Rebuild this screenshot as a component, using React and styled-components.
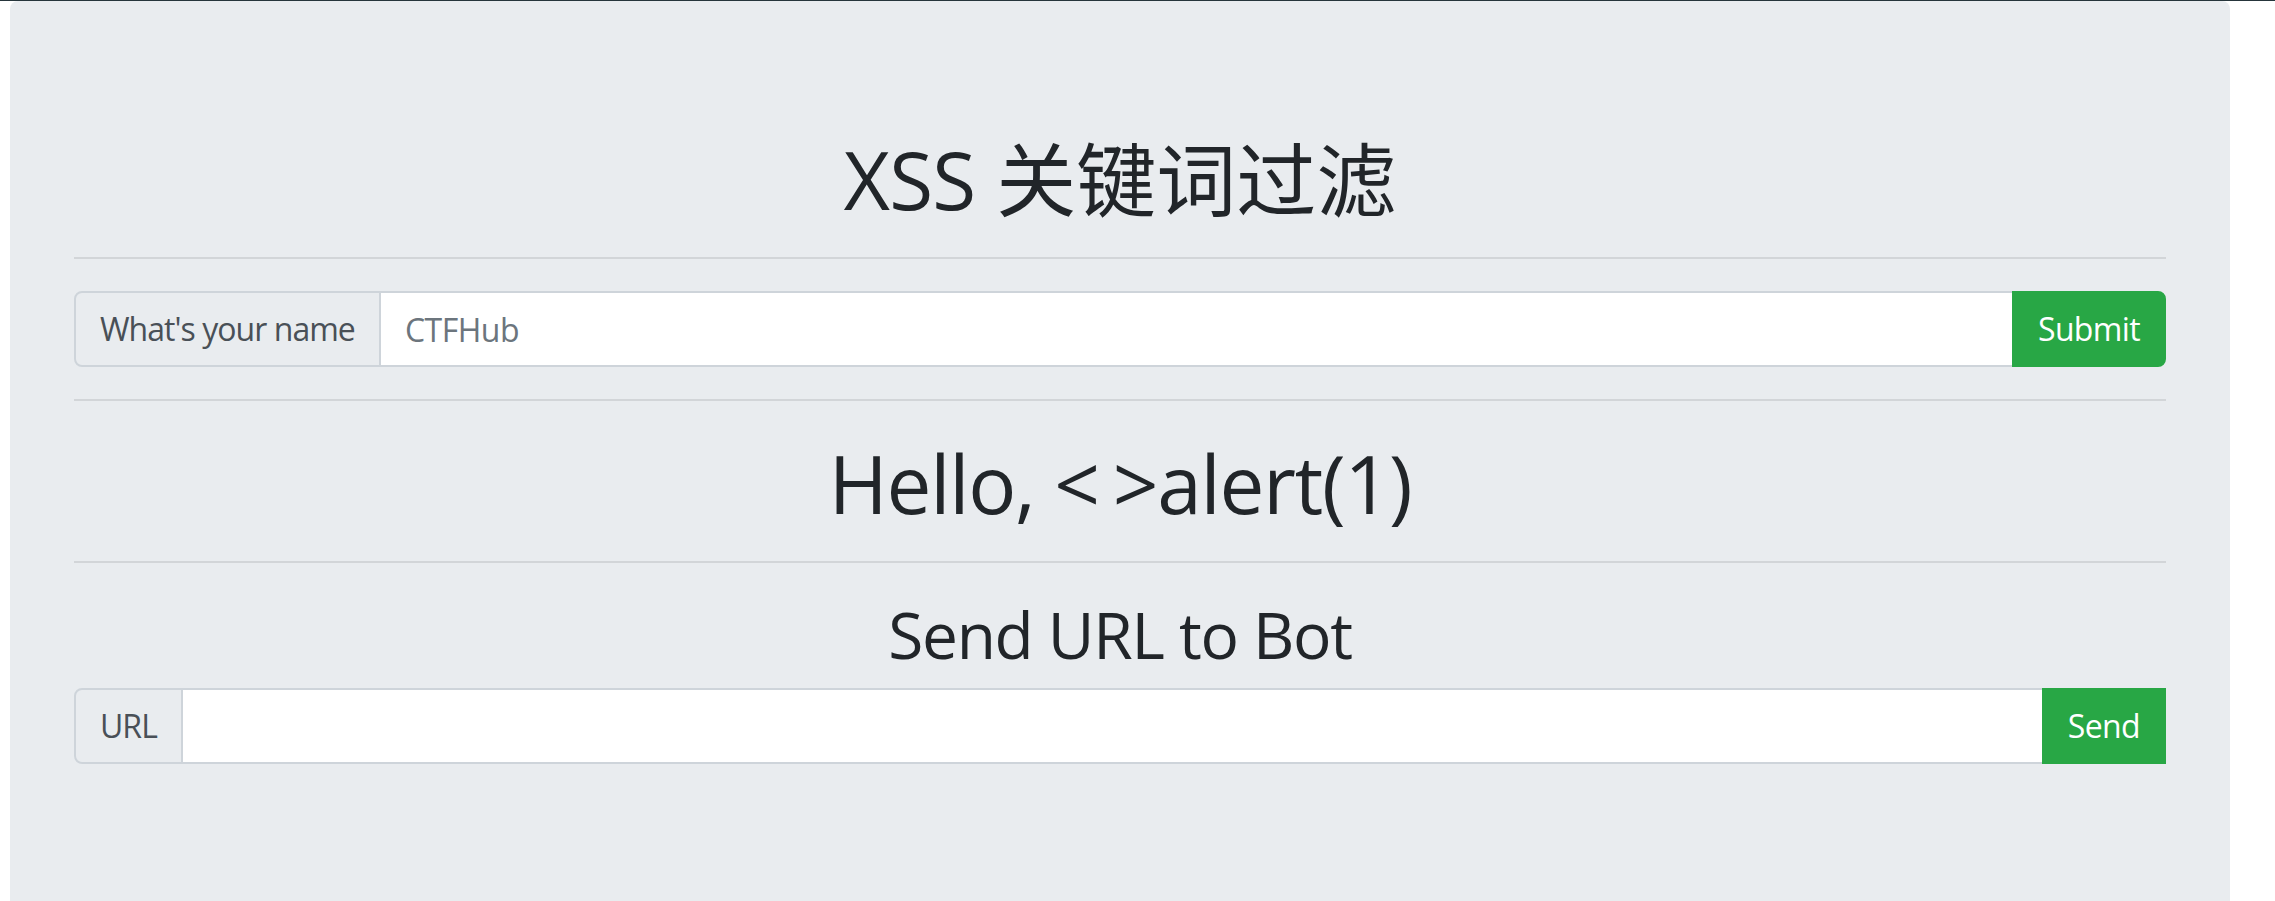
import React from "react";
import styled, { createGlobalStyle } from "styled-components";

const GlobalStyle = createGlobalStyle`
  html, body {
    margin: 0;
    padding: 0;
    background: #ffffff;
  }
  body {
    font-family: "Open Sans", "Noto Sans CJK SC", sans-serif;
    color: #212529;
  }
  * {
    box-sizing: border-box;
  }
`;

const Page = styled.div`
  min-height: 901px;
  border-top: 1px solid #26353b;
  padding-left: 10px;
`;

const Jumbotron = styled.div`
  width: 2220px;
  background: #e9ecef;
  border-radius: 8px;
  padding: 128px 64px 160px;
`;

const Title = styled.h1`
  margin: 0 0 16px;
  padding-top: 4px;
  font-size: 80px;
  line-height: 92px;
  font-weight: 400;
  text-align: center;
  letter-spacing: ${(p) => p.$tight || "0"};
`;

const Subtitle = styled.h2`
  margin: 0 0 16px;
  padding-top: 2px;
  font-size: 64px;
  line-height: 75px;
  font-weight: 400;
  text-align: center;
  letter-spacing: -0.02em;
`;

const Latin = styled.span`
  letter-spacing: -0.01em;
`;

// the original face leaves a gap after the "<"
const Spaced = styled.span`
  letter-spacing: 0.16em;
`;

const Rule = styled.hr`
  margin: 32px 0;
  border: 0;
  border-top: 2px solid #d2d5d8;
`;

const InputGroup = styled.form`
  display: flex;
  align-items: stretch;
  width: 100%;
  margin: 0;
`;

const Addon = styled.span`
  display: flex;
  align-items: center;
  padding: 12px 24px;
  font-size: 32px;
  line-height: 48px;
  color: #495057;
  background: #e9ecef;
  border: 2px solid #ced4da;
  border-radius: 8px 0 0 8px;
  white-space: nowrap;
  letter-spacing: -0.03em;
`;

const Field = styled.input`
  flex: 1;
  min-width: 0;
  height: 76px;
  padding: 12px 24px;
  font-family: inherit;
  font-size: 32px;
  line-height: 48px;
  color: #495057;
  background: #ffffff;
  border: 2px solid #ced4da;
  border-left: 0;
  border-right: 0;
  border-radius: 0;
  outline: none;
  letter-spacing: -0.015em;

  &::placeholder {
    color: #6c757d;
    opacity: 1;
  }
`;

const Button = styled.button`
  padding: 12px 24px;
  font-family: inherit;
  font-size: 32px;
  line-height: 48px;
  color: #ffffff;
  background: #28a745;
  border: 2px solid #28a745;
  border-radius: ${(p) => (p.$square ? "0" : "0 8px 8px 0")};
  cursor: pointer;
  letter-spacing: -0.02em;
`;

export default function App() {
  return (
    <>
      <GlobalStyle />
      <Page>
        <Jumbotron>
          <Title>
            <Latin>XSS</Latin> 关键词过滤
          </Title>
          <Rule />
          <InputGroup onSubmit={(e) => e.preventDefault()}>
            <Addon>What's your name</Addon>
            <Field type="text" placeholder="CTFHub" />
            <Button type="submit">Submit</Button>
          </InputGroup>
          <Rule />
          <Title $tight="-0.015em">
            Hello, <Spaced>&lt;</Spaced>&gt;alert(1)
          </Title>
          <Rule />
          <Subtitle>Send URL to Bot</Subtitle>
          <InputGroup onSubmit={(e) => e.preventDefault()}>
            <Addon>URL</Addon>
            <Field type="text" />
            <Button type="submit" $square>
              Send
            </Button>
          </InputGroup>
        </Jumbotron>
      </Page>
    </>
  );
}
